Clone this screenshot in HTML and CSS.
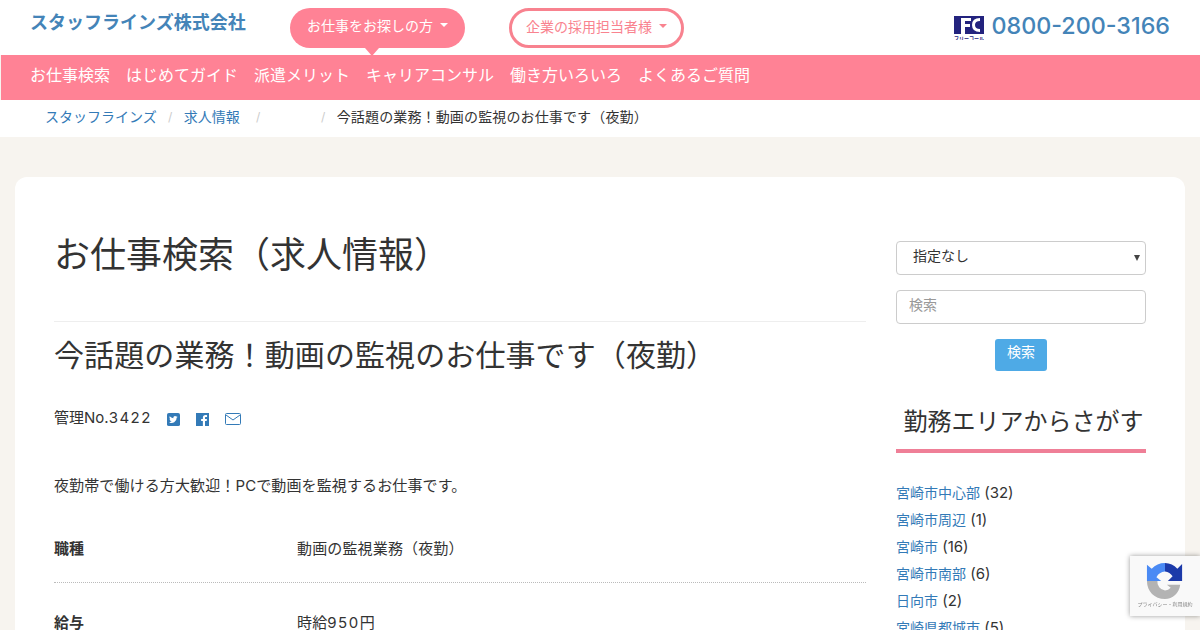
FILE: index.html
```html
<!DOCTYPE html>
<html lang="ja">
<head>
<meta charset="utf-8">
<title>今話題の業務！動画の監視のお仕事です（夜勤）</title>
<link rel="stylesheet" href="styles.css">
</head>
<body>
<header class="top">
  <a class="brand">スタッフラインズ株式会社</a>
  <div class="pills">
    <span class="pill pill-on">お仕事をお探しの方<i class="caret"></i></span>
    <span class="pill pill-off">企業の採用担当者様<i class="caret"></i></span>
  </div>
  <div class="phone">
    <svg class="fc" width="30" height="24" viewBox="0 0 30 24"><rect width="30" height="18" fill="#23237e"/><path d="M7 2h10v3h-6v3h5v3h-5v7H7z" fill="#fff"/><path d="M26 3.500c-4 0-6.500 2-6.500 5.500s2.500 5.500 6.500 5.500" fill="none" stroke="#fff" stroke-width="3"/><text class="fc-label" x="15" y="23.500" text-anchor="middle">フリーコール</text></svg>
    <span class="tel">0800-200-3166</span>
  </div>
</header>
<nav class="nav">
  <a>お仕事検索</a><a>はじめてガイド</a><a>派遣メリット</a><a>キャリアコンサル</a><a>働き方いろいろ</a><a>よくあるご質問</a>
</nav>
<div class="crumbs">
  <a>スタッフラインズ</a><span class="sep">/</span><a>求人情報</a><span class="sep sep-wide">/</span><span class="blank"></span><span class="sep">/</span><span class="current">今話題の業務！動画の監視のお仕事です（夜勤）</span>
</div>
<div class="page">
  <div class="card">
    <main class="main">
      <h1>お仕事検索（求人情報）</h1>
      <h2>今話題の業務！動画の監視のお仕事です（夜勤）</h2>
      <div class="meta">
        <span class="no">管理No.<span class="num">3422</span></span>
        <svg class="ico" viewBox="0 0 14 14"><rect width="14" height="14" rx="2" fill="#337ab7"/><path d="M11.500 4.200c-.4.2-.7.3-1.100.3.4-.2.7-.6.8-1-.4.2-.8.4-1.200.4a1.900 1.900 0 0 0-3.200 1.700 5.300 5.300 0 0 1-3.900-2 1.900 1.900 0 0 0 .6 2.500c-.3 0-.6-.1-.9-.2 0 .9.700 1.700 1.500 1.900-.3.100-.6.100-.9 0 .2.800 1 1.300 1.800 1.300a3.800 3.800 0 0 1-2.800.8 5.300 5.300 0 0 0 8.200-4.700c.4-.2.8-.6 1.100-1z" fill="#fff"/></svg>
        <svg class="ico" viewBox="0 0 14 14"><rect width="14" height="14" fill="#337ab7"/><path d="M9.700 14V8.600h1.800l.3-2.100H9.700V5.200c0-.6.200-1 1-1h1.200V2.300c-.2 0-.9-.1-1.700-.1-1.700 0-2.800 1-2.800 2.900v1.400H5.500v2.100h1.900V14z" fill="#fff"/></svg>
        <svg class="ico ico-mail" viewBox="0 0 16 12"><rect x=".5" y=".5" width="15" height="11" rx="1" fill="none" stroke="#337ab7"/><path d="M1 2l7 5 7-5" fill="none" stroke="#337ab7"/></svg>
      </div>
      <p class="lead">夜勤帯で働ける方大歓迎！PCで動画を監視するお仕事です。</p>
      <dl class="spec">
        <div class="spec-row"><dt>職種</dt><dd>動画の監視業務（夜勤）</dd></div>
        <div class="spec-row"><dt>給与</dt><dd>時給<span class="num">950</span>円</dd></div>
      </dl>
    </main>
    <aside class="side">
      <div class="select"><span>指定なし</span><i class="arrow"></i></div>
      <div class="input">検索</div>
      <div class="btn-wrap"><span class="btn">検索</span></div>
      <h3>勤務エリアからさがす</h3>
      <ul class="areas">
        <li><a>宮崎市中心部</a> (32)</li>
        <li><a>宮崎市周辺</a> (1)</li>
        <li><a>宮崎市</a> (16)</li>
        <li><a>宮崎市南部</a> (6)</li>
        <li><a>日向市</a> (2)</li>
        <li><a>宮崎県都城市</a> (5)</li>
      </ul>
    </aside>
  </div>
</div>
<div class="recaptcha">
  <svg width="38" height="38" viewBox="0 0 40 40">
    <path d="M20 1A19 19 0 0 0 6 7L1 3v17h15l-5-4a11 11 0 0 1 9-6z" fill="#4a8af4"/>
    <path d="M20 1a19 19 0 0 1 13 6l5-5v18H23l5-5a11 11 0 0 0-8-5z" fill="#1c3aa9"/>
    <path d="M1 20h11a9 9 0 0 0 8 10 10 10 0 0 0 6-3l-4-3h14c-1 9-8 15-16 15C9 39 1 31 1 20z" fill="#b3b3b3"/>
  </svg>
  <span>プライバシー・利用規約</span>
</div>
</body>
</html>
```
FILE: styles.css
```css
* { box-sizing: border-box; }
html, body { margin: 0; padding: 0; height: 630px; overflow: hidden; }
body {
  background: #f7f4ef;
  color: #333;
  font-family: Inter, "Noto Sans CJK JP", sans-serif;
  font-size: 15px;
  line-height: 1.5;
}
a { color: #337ab7; text-decoration: none; }
.num { letter-spacing: 1.500px; }
.top {
  height: 55px;
  background: #fff;
  display: flex;
  align-items: flex-start;
  padding: 0 30px;
}
.brand {
  width: 260px;
  margin-top: 8px;
  font-size: 18px;
  font-weight: 700;
  line-height: 30px;
  color: #4484b8;
  white-space: nowrap;
}
.pills { display: flex; gap: 44px; margin-top: 8px; }
.pill {
  position: relative;
  width: 175px;
  height: 40px;
  border-radius: 20px;
  font-size: 14px;
  display: flex;
  align-items: center;
  justify-content: center;
  padding-bottom: 6px;
  background: #ff8295;
  color: #fff;
  white-space: nowrap;
}
.pill-on::after {
  content: "";
  position: absolute;
  left: 75px;
  top: 40px;
  border: 7px solid transparent;
  border-top: 8px solid #ff8295;
  border-bottom: 0;
}
.pill-off { background: #fff; color: #f9838f; border: 3px solid #f8828f; padding-bottom: 4px; }
.caret {
  margin-left: 7px;
  border: 4px solid transparent;
  border-top: 4px solid currentColor;
  border-bottom: 0;
}
.phone { margin-left: auto; display: flex; align-items: flex-start; gap: 8px; margin-top: 16px; }
.fc { display: block; }
.fc-label { font-size: 5px; font-weight: 700; fill: #23237e; }
.tel { font-size: 23.300px; font-weight: 500; line-height: 20px; color: #4484b8; white-space: nowrap; }
.nav {
  height: 45px;
  margin-left: 1px;
  background: #ff8295;
  display: flex;
  gap: 16px;
  align-items: center;
  padding: 0 29px 5px;
}
.nav a { color: #fff; font-size: 16px; white-space: nowrap; }
.crumbs {
  height: 37px;
  background: #fff;
  padding: 6px 45px 0;
  display: flex;
  font-size: 14px;
  line-height: 22px;
  white-space: nowrap;
}
.sep { color: #ccc; width: 27px; text-align: center; font-size: 12px; }
.sep-wide { margin-left: 5px; }
.blank { width: 38px; }
.current { letter-spacing: .14px; }
.page { padding: 40px 15px 0; }
.card {
  background: #fff;
  border-radius: 12px 12px 0 0;
  padding: 0 39px;
  height: 600px;
  display: flex;
  gap: 30px;
}
.main { width: 812px; flex: none; }
h1 {
  margin: 51px 0 0;
  padding-bottom: 39px;
  font-size: 36px;
  font-weight: 400;
  line-height: 54px;
  border-bottom: 1px solid #eee;
}
h2 {
  margin: 9px 0 0;
  font-size: 30px;
  font-weight: 400;
  line-height: 48px;
  letter-spacing: .1px;
}
.meta { display: flex; align-items: center; height: 24px; margin-top: 27px; }
.no { font-size: 15px; margin-right: 15px; }
.ico { width: 13px; height: 13px; margin-right: 16px; margin-top: 2px; }
.ico-mail { width: 16px; height: 12px; }
.lead { margin: 44px 0 0; font-size: 15px; line-height: 24px; letter-spacing: .12px; }
.spec { margin: 25px 0 0; }
.spec-row { display: flex; padding: 14px 0 21px; border-bottom: 1px dotted #bbb; }
.spec-row + .spec-row { border-bottom: 0; padding-top: 28px; }
dt { width: 243px; font-weight: 700; font-size: 15px; line-height: 24px; }
dd { margin: 0; font-size: 15px; line-height: 24px; letter-spacing: .15px; }
.side { width: 250px; flex: none; padding-top: 64px; }
.select {
  height: 34px;
  border: 1px solid #ccc;
  border-radius: 4px;
  padding: 0 16px;
  font-size: 14px;
  line-height: 28px;
  display: flex;
  justify-content: space-between;
  align-items: center;
}
.select span { margin-top: -5px; }
.arrow { margin-right: -11px; border: 3.500px solid transparent; border-top: 6px solid #444; border-bottom: 0; }
.input {
  height: 34px;
  margin-top: 15px;
  border: 1px solid #ccc;
  border-radius: 4px;
  padding: 0 12px;
  font-size: 14px;
  line-height: 28px;
  color: #999;
}
.btn-wrap { display: flex; justify-content: center; margin-top: 15px; }
.btn {
  width: 52px;
  height: 32px;
  background: #4eaae6;
  color: #fff;
  border-radius: 3px;
  font-size: 14px;
  line-height: 26px;
  text-align: center;
}
h3 {
  margin: 30px 0 0;
  height: 52px;
  padding: 3px 0 0 5px;
  border-bottom: 4px solid #ef7f97;
  font-size: 24px;
  font-weight: 400;
  line-height: 36px;
  text-align: center;
  white-space: nowrap;
}
.areas { list-style: none; margin: 26px 0 0; padding: 0; font-size: 15px; line-height: 27px; }
.areas a { font-size: 14px; }
.recaptcha {
  position: fixed;
  left: 1130px;
  top: 556px;
  width: 70px;
  height: 60px;
  background: #f9f9f9;
  box-shadow: 0 0 5px rgba(0,0,0,.4);
  display: flex;
  flex-direction: column;
  align-items: center;
  padding-top: 6px;
  overflow: hidden;
}
.recaptcha svg { display: block; }
.recaptcha span { font-size: 5px; line-height: 8px; color: #888; white-space: nowrap; }
```
